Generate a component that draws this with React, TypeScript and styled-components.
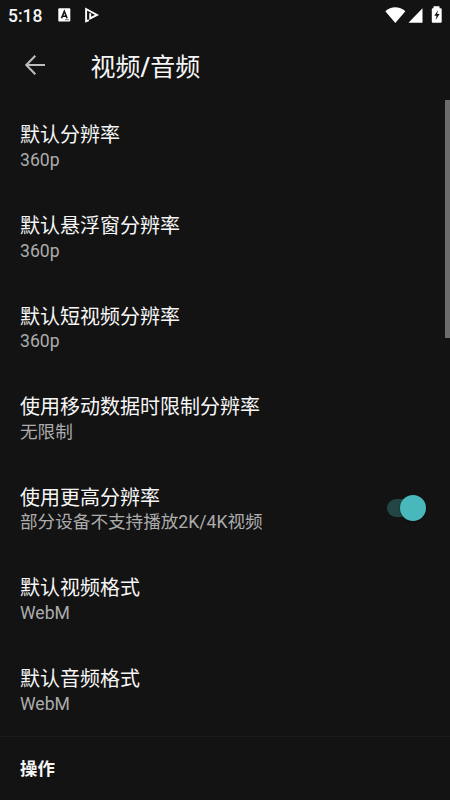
import React from 'react';
import styled, { createGlobalStyle } from 'styled-components';

const GlobalStyle = createGlobalStyle`
  * { box-sizing: border-box; }
  html, body { margin: 0; background: #131313; }
  body { font-family: Roboto, "Noto Sans CJK SC", sans-serif; overflow: hidden; }
`;

const Screen = styled.main`
  position: relative;
  width: 450px;
  height: 800px;
  overflow: hidden;
  display: flex;
  flex-direction: column;
  background: #131313;
  color: #f6f6f6;
`;

const StatusBar = styled.header`
  height: 30px;
  flex: none;
  display: flex;
  align-items: center;
  justify-content: space-between;
  padding: 0 7px 0 8px;
`;

const StatusGroup = styled.div`
  display: flex;
  align-items: center;
`;

const Clock = styled.span`
  width: 50px;
  font-size: 17.5px;
  font-weight: 500;
  line-height: 30px;
  padding-top: 1px;
`;

const SystemSvg = styled.svg`
  margin-bottom: 2px;
`;

const AppBar = styled.div`
  height: 71.7px;
  flex: none;
  display: flex;
  align-items: center;
  padding: 0 24px 1px;
`;

const BackButton = styled.button`
  width: 66.5px;
  padding: 0;
  border: 0;
  background: none;
  display: flex;
`;

const PageTitle = styled.h1`
  margin: 0;
  padding-top: 5px;
  font-size: 25px;
  font-weight: 500;
  line-height: 36px;
`;

const CjkTitle = styled.span`
  font-weight: 400;
`;

const List = styled.section`
  display: flex;
  flex-direction: column;
`;

const Row = styled.div`
  height: 90.6px;
  flex: none;
  display: flex;
  align-items: center;
  justify-content: space-between;
  padding: 0 24px 0 20px;
`;

const RowText = styled.div`
  display: flex;
  flex-direction: column;
`;

const RowTitle = styled.div`
  font-size: 20px;
  line-height: 27px;
  height: 25.6px;
`;

const RowSummary = styled.div`
  font-size: 17.6px;
  line-height: 24px;
  height: 23.4px;
  color: #acacac;
`;

const Track = styled.div`
  width: 35px;
  height: 18px;
  margin: 0 4px 2px 0;
  border-radius: 9px;
  background: #234546;
  display: flex;
  align-items: center;
`;

const Thumb = styled.div`
  width: 26px;
  height: 26px;
  flex: none;
  margin-left: 13px;
  border-radius: 50%;
  background: #48b8bc;
  box-shadow: 0 1px 2px rgba(0, 0, 0, 0.4);
`;

const Category = styled.h2`
  margin: 0;
  padding: 17px 20px 0;
  height: 65px;
  flex: none;
  border-top: 1px solid #1c1c1c;
  font-size: 17.4px;
  font-weight: 700;
  line-height: 30px;
`;

const ScrollThumb = styled.div`
  position: absolute;
  top: 100px;
  right: 0;
  width: 5px;
  height: 238px;
  background: #6c6c6c;
`;

const settings = [
  { title: '默认分辨率', summary: '360p' },
  { title: '默认悬浮窗分辨率', summary: '360p' },
  { title: '默认短视频分辨率', summary: '360p' },
  { title: '使用移动数据时限制分辨率', summary: '无限制' },
  { title: '使用更高分辨率', summary: '部分设备不支持播放2K/4K视频', enabled: true },
  { title: '默认视频格式', summary: 'WebM' },
  { title: '默认音频格式', summary: 'WebM' },
];

function NotificationIcons() {
  return (
    <svg width="42" height="16" viewBox="58 7 42 16">
      <rect x="58.3" y="8.2" width="12" height="13.4" rx="1" fill="#fff" />
      <path d="M61.5 18.3 64.3 11.3 67.1 18.3M62.5 16.2h3.6" fill="none" stroke="#131313" strokeWidth="1.6" />
      <path d="M65 19.7h4" stroke="#777" strokeWidth="1" />
      <path d="M88.8 20.2 86.1 21.4V9L97 14.9 90.2 18.4V13.3" fill="none" stroke="#fff" strokeWidth="1.9" />
    </svg>
  );
}

function SystemIcons() {
  return (
    <SystemSvg width="58" height="18" viewBox="385 5 58 18">
      <path d="M385.3 11.3C391 5.9 399.5 5.9 405.4 11.3L395.3 23Z" fill="#fff" />
      <path d="M408.5 22.7 422.5 8.2V22.7Z" fill="#fff" />
      <path d="M433.5 8.2V6.3h6v1.9h1.2q1 0 1 1v12.5q0 1-1 1h-7.9q-1 0-1-1V9.2q0-1 1-1Z" fill="#fff" />
      <path d="M438 10.2 434.3 15.8h2.2l-.8 4.2 3.9-5.9h-2.4Z" fill="#131313" />
    </SystemSvg>
  );
}

function BackArrow() {
  return (
    <svg width="22" height="22" viewBox="24 54 22 22" fill="none" stroke="#bcbcbc" strokeWidth="2.1">
      <path d="M45 65H26.5M35.3 55.8 26.3 65l9 9.2" />
    </svg>
  );
}

export default function App() {
  return (
    <Screen>
      <GlobalStyle />
      <StatusBar>
        <StatusGroup>
          <Clock>5:18</Clock>
          <NotificationIcons />
        </StatusGroup>
        <SystemIcons />
      </StatusBar>
      <AppBar>
        <BackButton aria-label="返回"><BackArrow /></BackButton>
        <PageTitle><CjkTitle>视频</CjkTitle>/<CjkTitle>音频</CjkTitle></PageTitle>
      </AppBar>
      <List>
        {settings.map(({ title, summary, enabled }) => (
          <Row key={title}>
            <RowText>
              <RowTitle>{title}</RowTitle>
              <RowSummary>{summary}</RowSummary>
            </RowText>
            {enabled && <Track role="switch" aria-checked="true"><Thumb /></Track>}
          </Row>
        ))}
      </List>
      <Category>操作</Category>
      <ScrollThumb />
    </Screen>
  );
}
